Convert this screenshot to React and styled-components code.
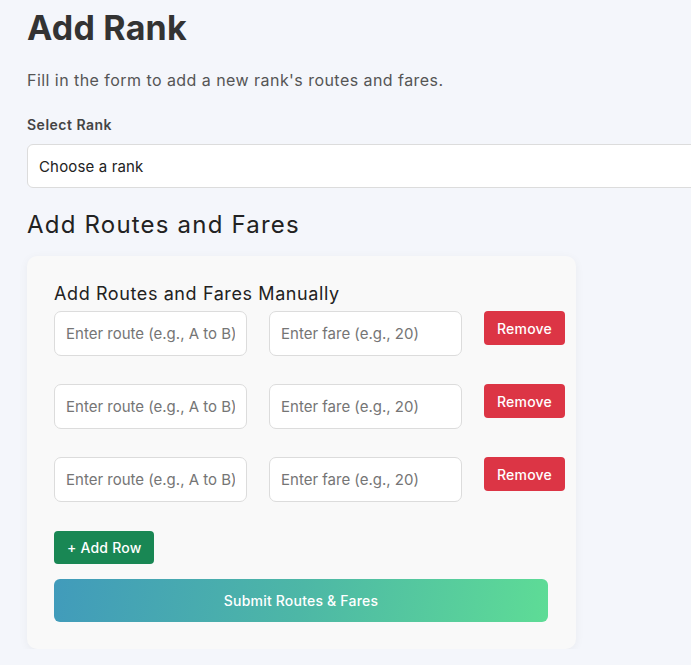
import React, { useState } from 'react'
import styled, { createGlobalStyle } from 'styled-components'

const GlobalStyle = createGlobalStyle`
  html, body {
    margin: 0;
    padding: 0;
    background: #f4f6fb;
    overflow: hidden;
  }
  body {
    font-family: Inter, "Open Sans", sans-serif;
    color: #333;
  }
  * { box-sizing: border-box; }
`

const Page = styled.div`
  padding: 6px 0 0 27px;
`

const Title = styled.h1`
  margin: 0;
  font-size: 34px;
  line-height: 44px;
  font-weight: 700;
  color: #333;
  letter-spacing: 0.2px;
`

const Subtitle = styled.p`
  margin: 18px 0 0;
  font-size: 16px;
  line-height: 24px;
  color: #555;
  letter-spacing: 0.45px;
`

const Label = styled.label`
  display: block;
  margin-top: 23px;
  font-size: 14px;
  line-height: 20px;
  font-weight: 600;
  color: #444;
  letter-spacing: 0.5px;
`

const Select = styled.select`
  display: block;
  margin-top: 9px;
  width: 700px;
  height: 44px;
  padding: 0 11px;
  border: 1px solid #dcdcdc;
  border-radius: 6px;
  background: #fff;
  font-family: inherit;
  font-size: 15px;
  color: #222;
  letter-spacing: 0.15px;
  appearance: none;
  outline: none;
`

const SectionTitle = styled.h2`
  margin: 21px 0 0;
  font-size: 24px;
  line-height: 32px;
  font-weight: 400;
  color: #222;
  letter-spacing: 1.2px;
`

const Card = styled.div`
  margin-top: 15px;
  width: 549px;
  padding: 26px 28px 27px 27px;
  background: #f9f9f9;
  border-radius: 10px;
  box-shadow: 0 2px 10px rgba(0, 0, 0, 0.05);
`

const CardTitle = styled.h3`
  margin: 0 0 5px;
  font-size: 18px;
  line-height: 24px;
  font-weight: 400;
  color: #222;
  letter-spacing: 0.6px;
`

const Row = styled.div`
  display: flex;
  align-items: flex-start;
  gap: 22px;
  margin-bottom: 28px;
  width: 520px;
`

const Input = styled.input`
  width: 193px;
  height: 45px;
  padding: 0 11px;
  border: 1px solid #dcdcdc;
  border-radius: 7px;
  background: #fff;
  font-family: inherit;
  font-size: 15px;
  outline: none;
  &::placeholder { color: #757575; }
`

const Button = styled.button`
  display: inline-flex;
  align-items: center;
  justify-content: center;
  border: none;
  border-radius: 4px;
  color: #fff;
  font-family: inherit;
  font-size: 14px;
  font-weight: 500;
  letter-spacing: 0.2px;
  cursor: pointer;
  background: ${p => p.$bg};
  height: ${p => p.$h}px;
  padding: 0 13px;
`

const SubmitButton = styled.button`
  display: block;
  margin-top: 15px;
  width: 100%;
  height: 43px;
  border: none;
  border-radius: 6px;
  background: linear-gradient(100deg, #419bbb 0%, #4db7a6 50%, #5edc96 100%);
  color: #fff;
  font-family: inherit;
  font-size: 14px;
  font-weight: 500;
  letter-spacing: 0.2px;
  cursor: pointer;
`

export default function App() {
  const [rows, setRows] = useState([1, 2, 3])

  return (
    <Page>
      <GlobalStyle />
      <Title>Add Rank</Title>
      <Subtitle>Fill in the form to add a new rank's routes and fares.</Subtitle>
      <Label>Select Rank</Label>
      <Select defaultValue="">
        <option value="">Choose a rank</option>
      </Select>
      <SectionTitle>Add Routes and Fares</SectionTitle>
      <Card>
        <CardTitle>Add Routes and Fares Manually</CardTitle>
        {rows.map(id => (
          <Row key={id}>
            <Input placeholder="Enter route (e.g., A to B)" />
            <Input placeholder="Enter fare (e.g., 20)" />
            <Button $bg="#dc3545" $h={34} onClick={() => setRows(rows.filter(r => r !== id))}>
              Remove
            </Button>
          </Row>
        ))}
        <Button $bg="#198754" $h={33} style={{ marginTop: 1 }} onClick={() => setRows([...rows, Date.now()])}>
          + Add Row
        </Button>
        <SubmitButton>Submit Routes &amp; Fares</SubmitButton>
      </Card>
    </Page>
  )
}
